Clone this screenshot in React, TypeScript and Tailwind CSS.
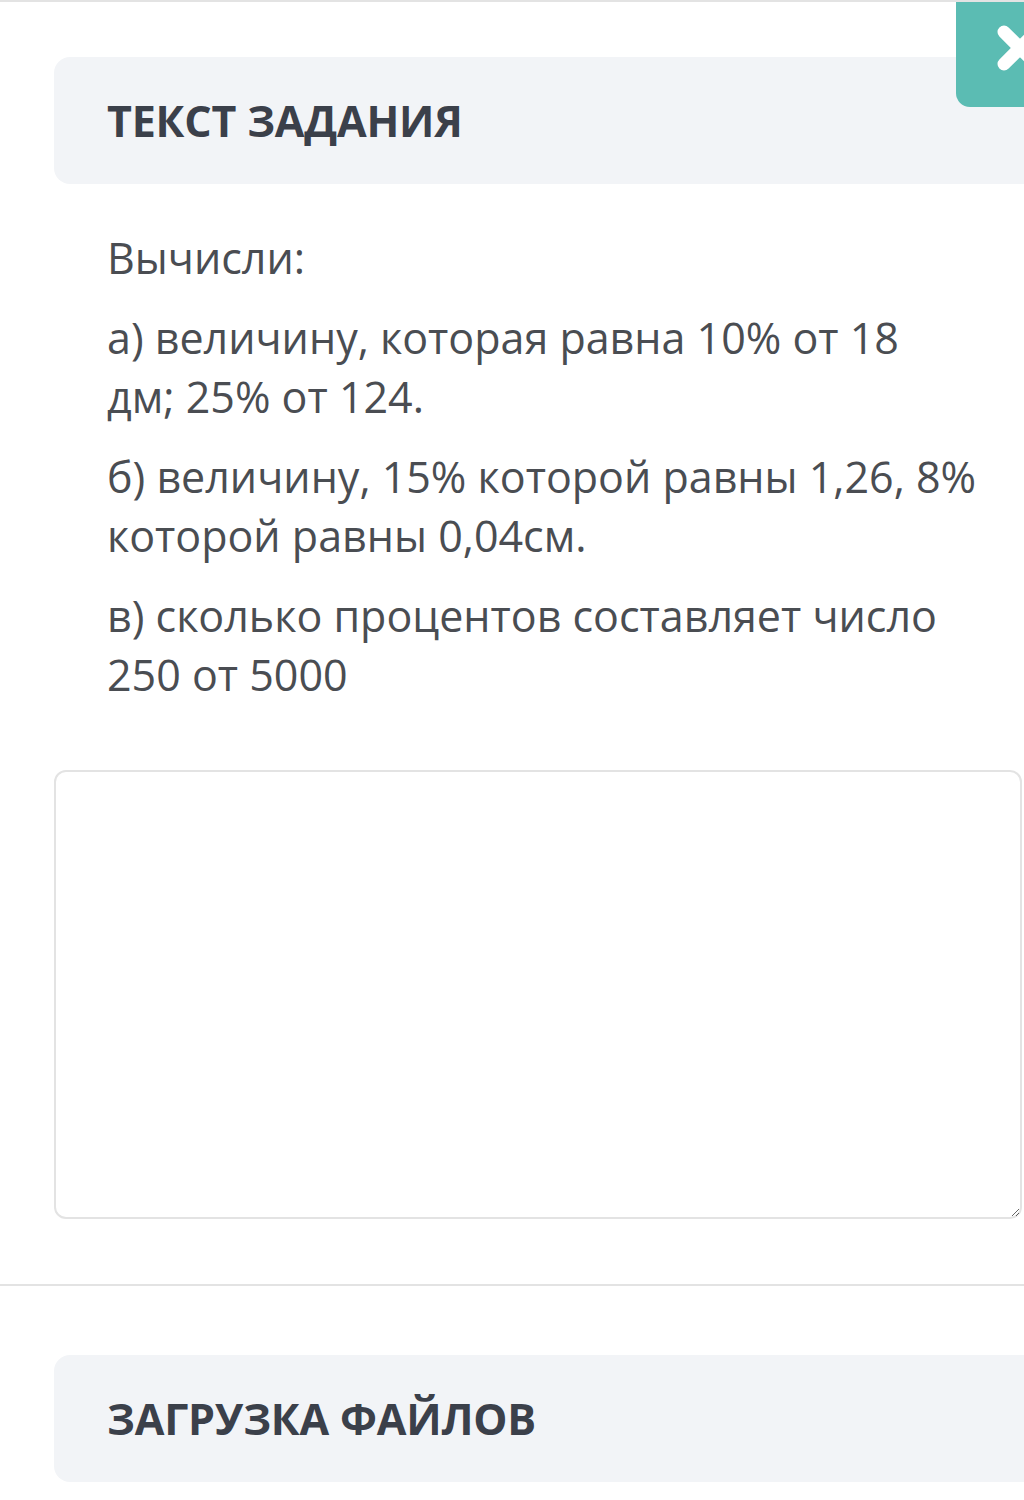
const font = { fontFamily: '"Open Sans", "Noto Sans", sans-serif' };

function SectionHeader({ title }: { title: string }) {
  return (
    <div className="flex h-[127px] w-[1040px] items-center rounded-[16px] bg-[#f2f4f7] pl-[53px]">
      <h2 className="text-[43px] font-bold leading-none tracking-[-0.2px] text-[#3b404a]">{title}</h2>
    </div>
  );
}

export default function App() {
  return (
    <div
      className="relative h-[1500px] w-full overflow-hidden border-t-2 border-[#e3e3e3] bg-white"
      style={font}
    >
      {/* кнопка закрытия */}
      <button className="absolute -top-[2px] left-[956px] flex h-[107px] w-[128px] items-center justify-center rounded-bl-[14px] bg-[#5bbcb3]">
        <svg width="52" height="52" viewBox="0 0 52 52" className="-mt-[12px]">
          <path d="M10 10 L42 42 M42 10 L10 42" stroke="white" strokeWidth="13" strokeLinecap="round" />
        </svg>
      </button>

      <div className="pl-[54px] pt-[55px]">
        <SectionHeader title="ТЕКСТ ЗАДАНИЯ" />

        <div className="flex flex-col gap-[21px] pl-[53px] pr-[30px] pt-[44px] text-[43px] leading-[59px] text-[#4a4d52]">
          <p>Вычисли:</p>
          <p>
            а) величину, которая равна 10% от 18
            <br />
            дм; 25% от 124.
          </p>
          <p>
            б) величину, 15% которой равны 1,26, 8%
            <br />
            которой равны 0,04см.
          </p>
          <p>
            в) сколько процентов составляет число
            <br />
            250 от 5000
          </p>
        </div>

        <textarea className="mt-[66px] block h-[449px] w-[968px] rounded-[12px] border-2 border-[#e3e3e3] bg-white outline-none" />
      </div>

      <div className="mt-[65px] h-[2px] w-full bg-[#e3e3e3]" />

      <div className="pl-[54px] pt-[69px]">
        <SectionHeader title="ЗАГРУЗКА ФАЙЛОВ" />
      </div>
    </div>
  );
}
